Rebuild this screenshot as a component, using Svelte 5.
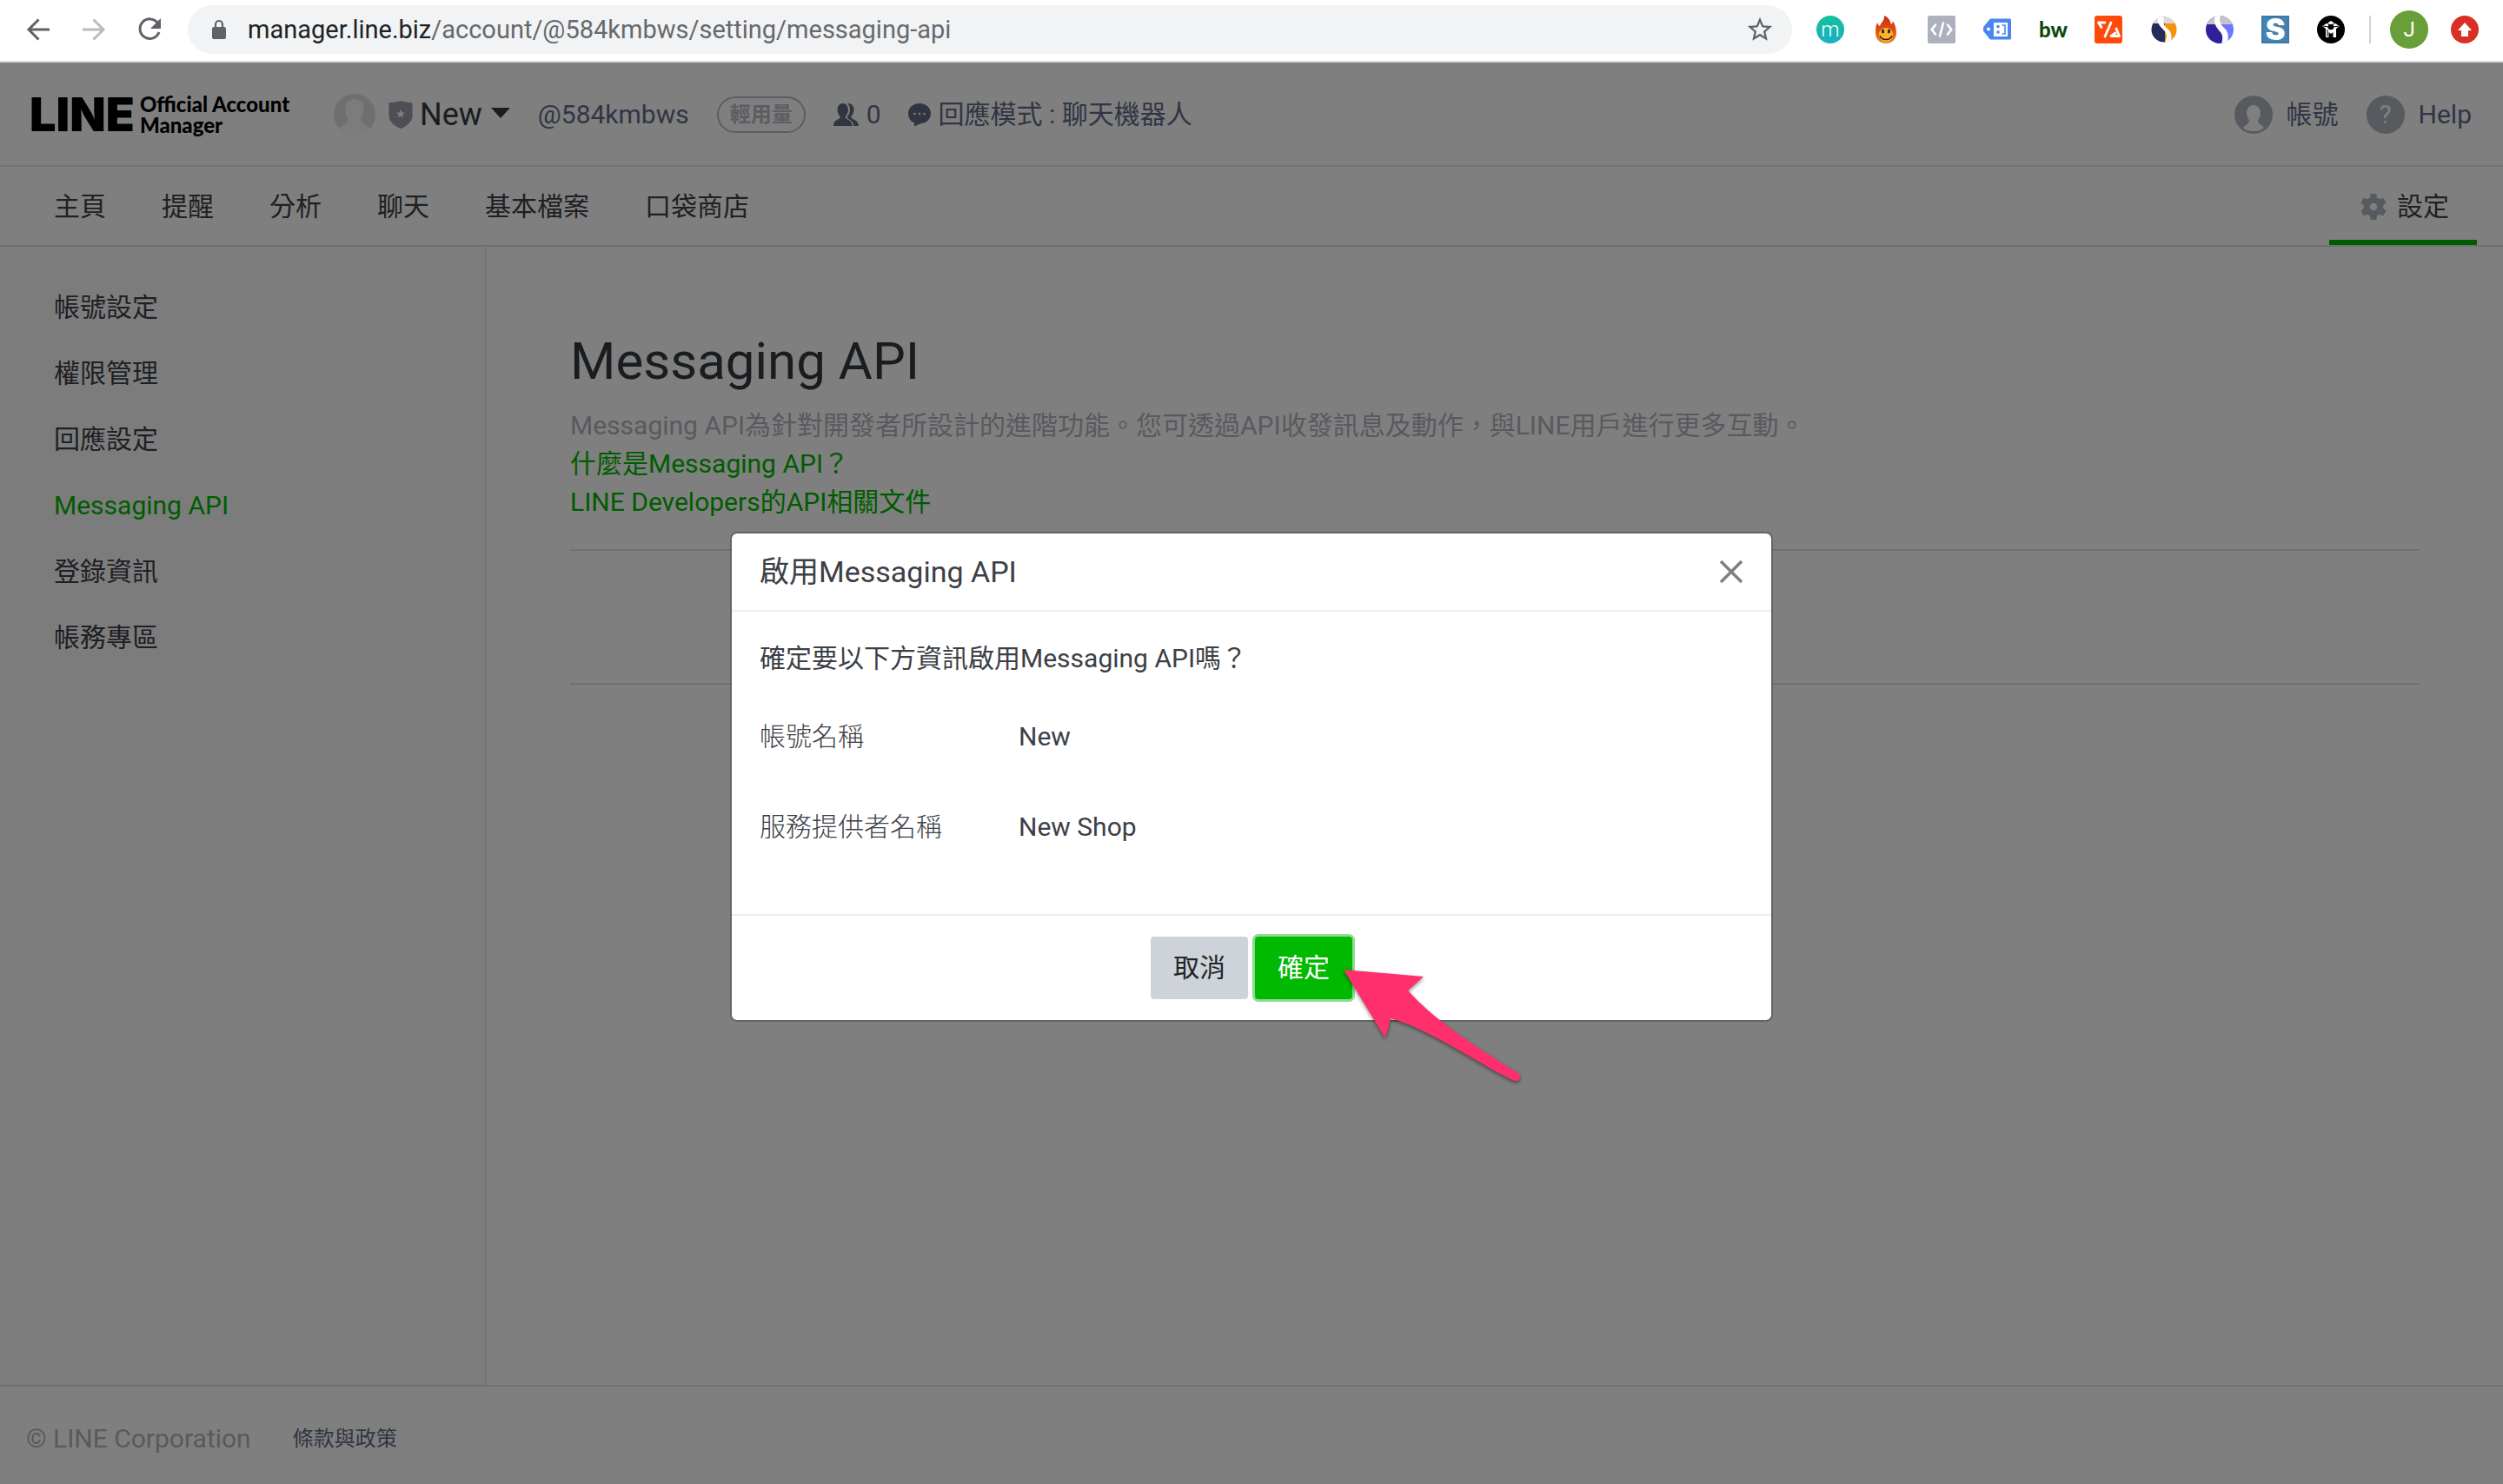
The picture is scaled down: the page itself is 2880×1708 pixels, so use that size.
<script>
  const tabs = ['主頁', '提醒', '分析', '聊天', '基本檔案', '口袋商店'];
  const menu = ['帳號設定', '權限管理', '回應設定', 'Messaging API', '登錄資訊', '帳務專區'];
  const current = 'Messaging API';
  const details = [
    { label: '帳號名稱', value: 'New' },
    { label: '服務提供者名稱', value: 'New Shop' }
  ];
  let open = $state(true);
</script>

<div class="window">
  <div class="toolbar">
    <div class="history">
      <button type="button" aria-label="Back">
        <svg width="32" height="32" viewBox="0 0 32 32" fill="none" stroke="#5f6368" stroke-width="3"><path d="M29 16H5M16.500 4.500 5 16l11.500 11.500" /></svg>
      </button>
      <button type="button" aria-label="Forward">
        <svg width="32" height="32" viewBox="0 0 32 32" fill="none" stroke="#babcbe" stroke-width="3"><path d="M3 16h24M15.500 4.500 27 16 15.500 27.500" /></svg>
      </button>
      <button type="button" aria-label="Reload">
        <svg width="32" height="32" viewBox="0 0 32 32"><path d="M25.500 8.500A11.300 11.300 0 1 0 27 19" fill="none" stroke="#5f6368" stroke-width="3" /><path d="M29 3v12H17z" fill="#5f6368" /></svg>
      </button>
    </div>
    <div class="address">
      <svg class="lock" width="18" height="24" viewBox="0 0 18 24"><rect x="1" y="9" width="16" height="14" rx="2" fill="#5f6368" /><path d="M5 10V6a4 4 0 0 1 8 0v4" fill="none" stroke="#5f6368" stroke-width="2.200" /></svg>
      <p class="url"><span>manager.line.biz</span>/account/@584kmbws/setting/messaging-api</p>
      <button type="button" aria-label="Bookmark">
        <svg width="34" height="34" viewBox="0 0 24 24" fill="#5f6368"><path d="M22 9.240l-7.190-.62L12 2 9.190 8.630 2 9.240l5.460 4.730L5.820 21 12 17.270 18.180 21l-1.630-7.030L22 9.240zM12 15.400l-3.760 2.270 1-4.280-3.320-2.880 4.380-.38L12 6.100l1.710 4.040 4.380.38-3.320 2.880 1 4.280L12 15.400z" /></svg>
      </button>
    </div>
    <div class="extensions">
      <button type="button" class="ext-m">m</button>
      <button type="button" aria-label="Flame">
        <svg width="32" height="32" viewBox="0 0 32 32">
          <defs><linearGradient id="flame" x1="0" y1="0" x2="0" y2="1"><stop offset="0" stop-color="#c9280c" /><stop offset=".5" stop-color="#e24e14" /><stop offset="1" stop-color="#f08a1c" /></linearGradient></defs>
          <path d="M14 0c5 2 7 6 8 10 1-1 2-2 2-4 3 5 4 10 4 14 0 7-5 12-12 12S4 27 4 20c0-4 0-8 2-12 1 2 1 3 3 4 1-4 6-7 5-12z" fill="url(#flame)" />
          <circle cx="16" cy="22" r="8" fill="#fbb42a" /><ellipse cx="12.500" cy="18" rx="1.500" ry="2.500" fill="#222" /><ellipse cx="19.500" cy="18" rx="1.500" ry="2.500" fill="#222" />
          <path d="M9 23c2 6 12 6 14 0" fill="none" stroke="#222" stroke-width="1.500" />
        </svg>
      </button>
      <button type="button" aria-label="Code">
        <svg width="32" height="32" viewBox="0 0 32 32"><rect width="32" height="32" rx="2" fill="#acb1bd" /><path d="M9 10.500 4.800 16 9 21.500M18 8.500l-4 15M23 10.500l4.200 5.500-4.200 5.500" fill="none" stroke="#fff" stroke-width="2.600" stroke-linecap="round" /></svg>
      </button>
      <button type="button" aria-label="Tag">
        <svg width="32" height="32" viewBox="0 0 32 32"><path d="M8 3.500h22.500a1.500 1.500 0 0 1 1.500 1.500v21a1.500 1.500 0 0 1-1.500 1.500H8L1 19a5 5 0 0 1 0-7z" fill="#4a86f0" /><rect x="12" y="8" width="16" height="16" fill="#fff" /><circle cx="6" cy="15.500" r="2" fill="#fff" /><circle cx="17" cy="12.500" r="1.800" fill="#4a86f0" /><circle cx="17" cy="19" r="1.800" fill="#4a86f0" /><path d="M21.500 11H25v10h-3.500" fill="none" stroke="#4a86f0" stroke-width="1.600" /></svg>
      </button>
      <button type="button" class="ext-bw">bw</button>
      <button type="button" aria-label="Code slash">
        <svg width="32" height="32" viewBox="0 0 32 32"><rect width="32" height="32" rx="3" fill="#ff4a0c" /><path d="M12 8H4.500L8 13.500M19 8l-7 16M25 15l3.500 8.500H19l5-3.500" fill="none" stroke="#fff" stroke-width="2.800" stroke-linejoin="round" stroke-linecap="round" /></svg>
      </button>
      <button type="button" aria-label="Swirl orange">
        <svg width="32" height="32" viewBox="0 0 32 32"><defs><clipPath id="disc-a"><circle cx="16" cy="16" r="14.500" /></clipPath></defs><g clip-path="url(#disc-a)"><path d="M0 0h18v32H0z" fill="#1f2c5c" /><path d="M17 0h15v32H17z" fill="#f6920b" /><path d="M0 0h32v9H0z" fill="#d8d8d8" /><path d="M9 0C7 8 11 12 16 17c4 4 4 9 0 15h6c4-6 3-12-1-16-4-3-8-8-4-16z" fill="#fff" /></g></svg>
      </button>
      <button type="button" aria-label="Swirl blue">
        <svg width="32" height="32" viewBox="0 0 32 32"><defs><clipPath id="disc-b"><circle cx="16" cy="16" r="16" /></clipPath></defs><g clip-path="url(#disc-b)"><path d="M0 0h20v32H0z" fill="#30209a" /><path d="M19 0h13v32H19z" fill="#6d78ff" /><path d="M0 0h32v10H0z" fill="#c4c4c6" /><path d="M11 0C8 8 12 13 16 18c4 4 4 9 2 14h6c3-6 2-12-1-16-4-4-9-9-6-16z" fill="#fff" /></g></svg>
      </button>
      <button type="button" class="ext-s">S</button>
      <button type="button" aria-label="Cube">
        <svg width="32" height="32" viewBox="0 0 32 32"><circle cx="16" cy="16" r="16" fill="#000" /><path d="M6 12 16 6l10 6-4 3v10h-3.500v-6l-2.500 2-2.500-2v6H10V15z" fill="#fff" /><circle cx="16" cy="13" r="3.300" fill="#000" /><path d="M7 12l6 1M25 12l-6 1M12 8l2 3M20 8l-2 3M12 16v8" stroke="#000" stroke-width="1" /></svg>
      </button>
    </div>
    <span class="divider"></span>
    <button type="button" class="profile">J</button>
    <button type="button" class="update" aria-label="Update">
      <svg width="32" height="32" viewBox="0 0 32 32"><circle cx="16" cy="16" r="16" fill="#d93025" /><path d="M16 8l8 9h-4v7h-8v-7H8z" fill="#fff" /></svg>
    </button>
  </div>

  <div class="app">
    <header class="top">
      <a class="logo" href="#home"><b>LINE</b><span>Official Account<br />Manager</span></a>
      <svg class="avatar" width="48" height="48" viewBox="0 0 48 48"><defs><clipPath id="face"><circle cx="24" cy="24" r="24" /></clipPath></defs><g clip-path="url(#face)"><path d="M0 0h48v48H0z" fill="#dcdfe2" /><path d="M24 6c7 0 10.500 5 10.500 12 0 5-2 9-4 11 2 5 7 8 12 11v8H5v-8c5-3 10-6 12-11-2-2-4-6-4-11C13 11 17 6 24 6z" fill="#f8f9fa" /></g></svg>
      <button type="button" class="account">
        <svg width="28" height="32" viewBox="0 0 28 32"><path d="M14 0c4 1.500 9 2 13.500 2v15c0 7-6 12-13.500 15C6.500 29 .5 24 .5 17V2C5 2 10 1.500 14 0z" fill="#9a9ea9" /><path d="M14 10l1.400 3.400 3.600.3-2.800 2.300.9 3.600-3.100-2-3.100 2 .9-3.600L9 13.700l3.600-.3z" fill="#fff" /></svg>
        <span>New</span>
        <svg class="caret" width="22" height="12" viewBox="0 0 22 12"><path d="M0 0h22L11 12z" fill="#343a40" /></svg>
      </button>
      <span class="meta">@584kmbws</span>
      <span class="plan">輕用量</span>
      <span class="meta icon-text">
        <svg width="30" height="26" viewBox="0 0 30 26" fill="#616a82"><path d="M10.500 0c4 0 6.500 3 6.500 7.500 0 3-1.500 5.500-3 7v2.500c3 2 7 3 8 9H0c0-6 4-7 7.500-9v-2.500c-1.500-1.500-3-4-3-7C4.500 3 7 0 10.500 0z" /><path d="M17 0c4 0 6.500 3 6.500 7.500 0 3-1.500 5.500-3 7v2.500c4 2 8 3 8.500 9h-5.500c-.5-5-4.500-7-7.500-9v-2c2-2 3-5 3-8 0-3-1-5.500-3-7z" /></svg>
        0
      </span>
      <span class="meta icon-text chat">
        <svg width="28" height="28" viewBox="0 0 28 28"><path d="M14 1c7.500 0 13 5 13 11.500S22 24 14.500 24.500L8 27.500v-4C3.500 21.500 1 17.500 1 12.500 1 6 6.500 1 14 1z" fill="#616a82" /><g fill="#fff"><circle cx="8.500" cy="13" r="1.300" /><circle cx="14" cy="13" r="1.300" /><circle cx="19.500" cy="13" r="1.300" /></g></svg>
        回應模式 : 聊天機器人
      </span>
      <div class="user">
        <a href="#account">
          <svg width="44" height="44" viewBox="0 0 44 44"><circle cx="22" cy="22" r="22" fill="#aeb4bf" /><path d="M22 11c5 0 8 4 8 9 0 4-1.500 6.500-3 8 0 5 4 5 7 9-3 3-7 4-12 4s-9-1-12-4c3-4 7-4 7-9-1.500-1.500-3-4-3-8 0-5 3-9 8-9z" fill="#fff" /></svg>
          帳號
        </a>
        <a href="#help"><span class="help">?</span>Help</a>
      </div>
    </header>

    <nav class="tabs">
      {#each tabs as tab}<a href="#{tab}">{tab}</a>{/each}
      <a class="settings" href="#settings">
        <svg width="30" height="32" viewBox="0 0 28 30"><path fill-rule="evenodd" d="M11 1h6l.8 4.200 2.700 1.600L24.600 5.500l3 5-3.200 3v3l3.200 3-3 5-4.100-1.300-2.700 1.600L17 29h-6l-.8-4.200-2.700-1.600-4.100 1.300-3-5 3.200-3v-3l-3.200-3 3-5 4.100 1.300 2.700-1.600zM14 11a4 4 0 1 0 0 8 4 4 0 0 0 0-8z" fill="#aeb4bf" /></svg>
        設定
      </a>
    </nav>

    <div class="body">
      <aside>
        {#each menu as item}<a href="#{item}" class:active={item === current}>{item}</a>{/each}
      </aside>
      <main>
        <h1>Messaging API</h1>
        <p>Messaging API為針對開發者所設計的進階功能。您可透過API收發訊息及動作，與LINE用戶進行更多互動。</p>
        <a href="#about">什麼是Messaging API？</a>
        <a href="#docs">LINE Developers的API相關文件</a>
        <div class="panel"></div>
      </main>
    </div>

    <footer class="bottom">
      <span>© LINE Corporation</span>
      <a href="#terms">條款與政策</a>
    </footer>

    {#if open}
      <div class="backdrop">
        <div class="modal" role="dialog" aria-modal="true" aria-labelledby="dialog-title">
          <div class="modal-head">
            <h2 id="dialog-title">啟用Messaging API</h2>
            <button type="button" aria-label="Close" onclick={() => (open = false)}>
              <svg width="28" height="28" viewBox="0 0 28 28" stroke="#7f7f7f" stroke-width="3.500"><path d="M2 2l24 24M26 2 2 26" /></svg>
            </button>
          </div>
          <div class="modal-body">
            <p>確定要以下方資訊啟用Messaging API嗎？</p>
            <dl>
              {#each details as row}
                <div><dt>{row.label}</dt><dd>{row.value}</dd></div>
              {/each}
            </dl>
          </div>
          <div class="modal-foot">
            <button type="button" class="cancel" onclick={() => (open = false)}>取消</button>
            <div class="ok-wrap">
              <button type="button" class="ok" onclick={() => (open = false)}>確定</button>
              <svg class="pointer" width="212" height="132" viewBox="0 0 212 132"><path d="M2 2 94 10 76 26C106 60 150 88 204 122q4 8-6 8C150 106 100 70 56 58L50 81z" fill="#ff2f6e" /></svg>
            </div>
          </div>
        </div>
      </div>
    {/if}
  </div>
</div>

<style>
  :global(body) { margin: 0; }
  .window {
    display: flex; flex-direction: column; min-height: 100vh; background: #fff;
    font: 400 30px/44px Roboto, "Noto Sans CJK TC", sans-serif; color: #3c4046;
  }
  a { color: inherit; text-decoration: none; }
  button { margin: 0; padding: 0; border: 0; background: none; font: inherit; color: inherit; cursor: pointer; }
  svg { display: block; flex: none; }
  h1, h2, p, dl, dd { margin: 0; font-weight: 400; }

  .toolbar { display: flex; align-items: center; box-sizing: border-box; height: 72px; padding: 0 28px 2px; border-bottom: 2px solid #d5d7da; }
  .history { display: flex; gap: 32px; margin-right: 28px; }
  .address { display: flex; flex: 1; align-items: center; height: 56px; padding: 0 20px 0 27px; border-radius: 28px; background: #f1f3f4; }
  .url { flex: 1; margin-left: 24px; font-size: 29px; color: #66696d; }
  .url span { color: #202124; }
  .extensions { display: flex; align-items: center; gap: 32px; margin-left: 28px; }
  .extensions button { width: 32px; height: 32px; line-height: 32px; }
  .extensions .ext-m { border-radius: 50%; background: linear-gradient(#12c09c, #18b0c8); color: #fff; font-size: 24px; font-weight: 300; line-height: 28px; }
  .extensions .ext-bw { color: #0d4a0c; font: 900 24px/32px Lato, sans-serif; }
  .extensions .ext-s { border: 2px solid #3b78a8; background: #4583b2; color: #fff; font: 900 34px/28px Inter, sans-serif; }
  .divider { width: 2px; height: 32px; margin: 0 22px 0 28px; background: #cfd1d4; }
  .profile { width: 44px; height: 44px; margin-right: 26px; border-radius: 50%; background: #689f38; color: #fff; font-size: 24px; line-height: 44px; }

  .app { position: relative; display: flex; flex: 1; flex-direction: column; }
  .top { display: flex; align-items: center; box-sizing: border-box; height: 120px; padding: 2px 36px 0 34px; border-bottom: 2px solid #e6e8ee; color: #616b88; }
  .logo { display: flex; align-items: center; gap: 6px; width: 350px; color: #000; }
  .logo b { font: 900 54px/54px Inter, sans-serif; }
  .logo span { font: 900 24px/24px Lato, sans-serif; white-space: nowrap; }
  .account { display: flex; align-items: center; gap: 8px; margin: 0 32px 0 15px; color: #343a40; font-size: 36px; }
  .caret { margin: 0 0 4px 2px; }
  .plan { box-sizing: border-box; height: 42px; margin: 0 32px; padding: 0 13px; border: 2px solid #b7bbc4; border-radius: 21px; color: #b7bbc4; font-size: 24px; font-weight: 700; line-height: 38px; }
  .icon-text { display: flex; align-items: center; gap: 8px; }
  .chat { margin-left: 30px; }
  .user { display: flex; gap: 32px; margin-left: auto; }
  .user a { display: flex; align-items: center; gap: 16px; }
  .help { width: 44px; border-radius: 50%; background: #aeb4bf; color: #fff; text-align: center; }

  .tabs { display: flex; height: 90px; padding: 0 30px; border-bottom: 2px solid #dfe0e3; line-height: 92px; }
  .tabs a { padding: 0 32px; }
  .tabs .settings { display: flex; align-items: center; box-sizing: border-box; gap: 12px; height: 90px; margin-left: auto; padding: 8px 32px 0 36px; border-bottom: 6px solid #00b900; line-height: 76px; }

  .body { display: flex; flex: 1; }
  aside { display: flex; flex-direction: column; gap: 32px; box-sizing: border-box; width: 560px; padding: 48px 62px; border-right: 2px solid #e2e3e6; background: #f8f8fb; }
  aside .active { color: #00b900; }
  main { display: flex; flex: 1; flex-direction: column; align-items: flex-start; padding: 96px 96px 0; }
  main h1 { margin-bottom: 16px; font-size: 60px; line-height: 72px; color: #343a40; }
  main p { color: #b0b4be; }
  main a { color: #00b900; }
  .panel { align-self: stretch; height: 152px; margin-top: 32px; border: solid #e2e3e6; border-width: 2px 0; }

  .bottom { display: flex; align-items: center; gap: 48px; height: 114px; padding: 8px 30px 0; box-sizing: border-box; border-top: 2px solid #e2e3e6; color: #aeb4bf; }
  .bottom a { color: #616b88; font-size: 24px; }

  .backdrop { position: absolute; inset: 0; display: flex; align-items: center; justify-content: center; padding-top: 8px; background: rgba(0, 0, 0, 0.5); }
  .modal { box-sizing: border-box; width: 1200px; border: 2px solid rgba(0, 0, 0, 0.2); border-radius: 8px; background: #fff; background-clip: padding-box; }
  .modal-head { display: flex; align-items: center; justify-content: space-between; height: 88px; padding: 0 32px; border-bottom: 2px solid #eee; }
  .modal-head h2 { font-size: 34px; }
  .modal-body { padding: 32px 32px 78px; }
  dl { display: grid; gap: 60px; margin-top: 46px; }
  dl div { display: grid; grid-template-columns: 298px 1fr; font-weight: 300; }
  .modal-foot { display: flex; justify-content: center; gap: 8px; padding: 24px; border-top: 2px solid #eee; }
  .modal-foot button { width: 112px; height: 72px; border-radius: 4px; background: #ced3da; color: #212529; }
  .modal-foot .ok { background: #00b900; color: #fff; box-shadow: 0 0 0 3px #8cdc90; }
  .ok-wrap { position: relative; }
  .pointer { position: absolute; top: 36px; left: 100px; filter: drop-shadow(0 2px 2px rgba(0, 0, 0, 0.45)); pointer-events: none; }
</style>
